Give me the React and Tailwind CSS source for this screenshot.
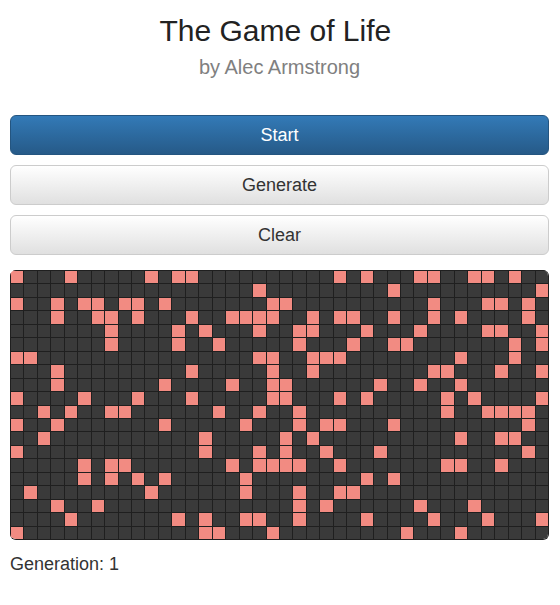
import React, { useState } from "react";

const COLS = 40;
const ROWS = 20;

// live columns of each row, top to bottom
const seed = [
  [0, 4, 10, 12, 13, 24, 26, 30, 31, 34, 35, 37],
  [18, 28, 39],
  [0, 3, 5, 6, 8, 9, 11, 19, 20, 31, 35, 36, 38],
  [3, 6, 7, 9, 13, 16, 17, 18, 19, 22, 24, 25, 28, 31, 33, 38],
  [7, 12, 14, 18, 21, 22, 26, 30, 35, 36, 39],
  [7, 12, 15, 21, 25, 28, 29, 37, 39],
  [0, 1, 18, 19, 22, 23, 24, 33, 37],
  [3, 13, 19, 22, 31, 32, 36, 39],
  [3, 11, 16, 19, 20, 27, 30, 33],
  [0, 5, 9, 13, 19, 20, 24, 26, 32, 34, 39],
  [2, 4, 7, 8, 15, 18, 21, 32, 35, 36, 37, 38],
  [0, 3, 11, 17, 21, 23, 24, 28, 38],
  [2, 14, 20, 22, 33, 36, 37],
  [0, 14, 18, 20, 23, 27, 38],
  [5, 7, 8, 16, 18, 19, 20, 21, 24, 32, 33, 36],
  [5, 7, 9, 11, 17, 26, 28],
  [1, 10, 17, 21, 24, 25],
  [3, 6, 21, 23, 30, 34],
  [4, 12, 14, 17, 18, 21, 26, 31, 35, 39],
  [0, 14, 15, 19, 29, 33],
];

const makeBoard = (isAlive) =>
  Array.from({ length: ROWS }, (_, r) =>
    Array.from({ length: COLS }, (_, c) => isAlive(r, c))
  );

const nextBoard = (board) =>
  makeBoard((r, c) => {
    let count = 0;
    for (let dr = -1; dr <= 1; dr++) {
      for (let dc = -1; dc <= 1; dc++) {
        if ((dr || dc) && board[r + dr]?.[c + dc]) count++;
      }
    }
    return count === 3 || (board[r][c] && count === 2);
  });

const defaultBtn = "border-[#cccccc] from-white to-[#e0e0e0] text-[#333333]";
const primaryBtn = "border-[#245580] from-[#337ab7] to-[#265a88] text-white";

const Button = ({ primary, onClick, children }) => (
  <button
    type="button"
    onClick={onClick}
    className={`h-10 w-full cursor-pointer rounded-md border bg-linear-to-b text-lg leading-6 ${
      primary ? primaryBtn : defaultBtn
    }`}
  >
    {children}
  </button>
);

const Board = ({ board }) => (
  <div className="grid grid-cols-[repeat(40,minmax(0,1fr))] overflow-hidden rounded-md border-r border-b border-[#1f1f1f]">
    {board.map((row, r) =>
      row.map((alive, c) => (
        <div
          key={`${r}-${c}`}
          className={`aspect-square border-t border-l border-[#1f1f1f] ${
            alive ? "bg-[#f28b82]" : "bg-[#3a3a3a]"
          }`}
        />
      ))
    )}
  </div>
);

export default function App() {
  const [board, setBoard] = useState(() =>
    makeBoard((r, c) => seed[r].includes(c))
  );
  const [generation, setGeneration] = useState(1);
  const [running, setRunning] = useState(false);

  React.useEffect(() => {
    if (!running) return;
    const timer = setInterval(() => {
      setBoard(nextBoard);
      setGeneration((n) => n + 1);
    }, 200);
    return () => clearInterval(timer);
  }, [running]);

  const reset = (isAlive) => {
    setRunning(false);
    setGeneration(1);
    setBoard(makeBoard(isAlive));
  };

  return (
    <main className="bg-white pt-[13px] pr-[11px] pb-6 pl-[10px] font-['Liberation_Sans',Arial,sans-serif] text-[#333333]">
      {/* Heading */}
      <header className="text-center">
        <h1 className="text-3xl text-[#222222]">The Game of Life&nbsp;</h1>
        <p className="mt-1 text-xl text-[#808080]">by Alec Armstrong</p>
      </header>

      {/* Controls */}
      <div className="mt-[34px] flex flex-col gap-[10px]">
        <Button primary onClick={() => setRunning(!running)}>
          {running ? "Stop" : "Start"}
        </Button>
        <Button onClick={() => reset(() => Math.random() < 0.25)}>
          Generate
        </Button>
        <Button onClick={() => reset(() => false)}>Clear</Button>
      </div>

      <div className="mt-[15px]">
        <Board board={board} />
      </div>
      <p className="mt-[10px] text-lg">Generation: {generation}</p>
    </main>
  );
}
